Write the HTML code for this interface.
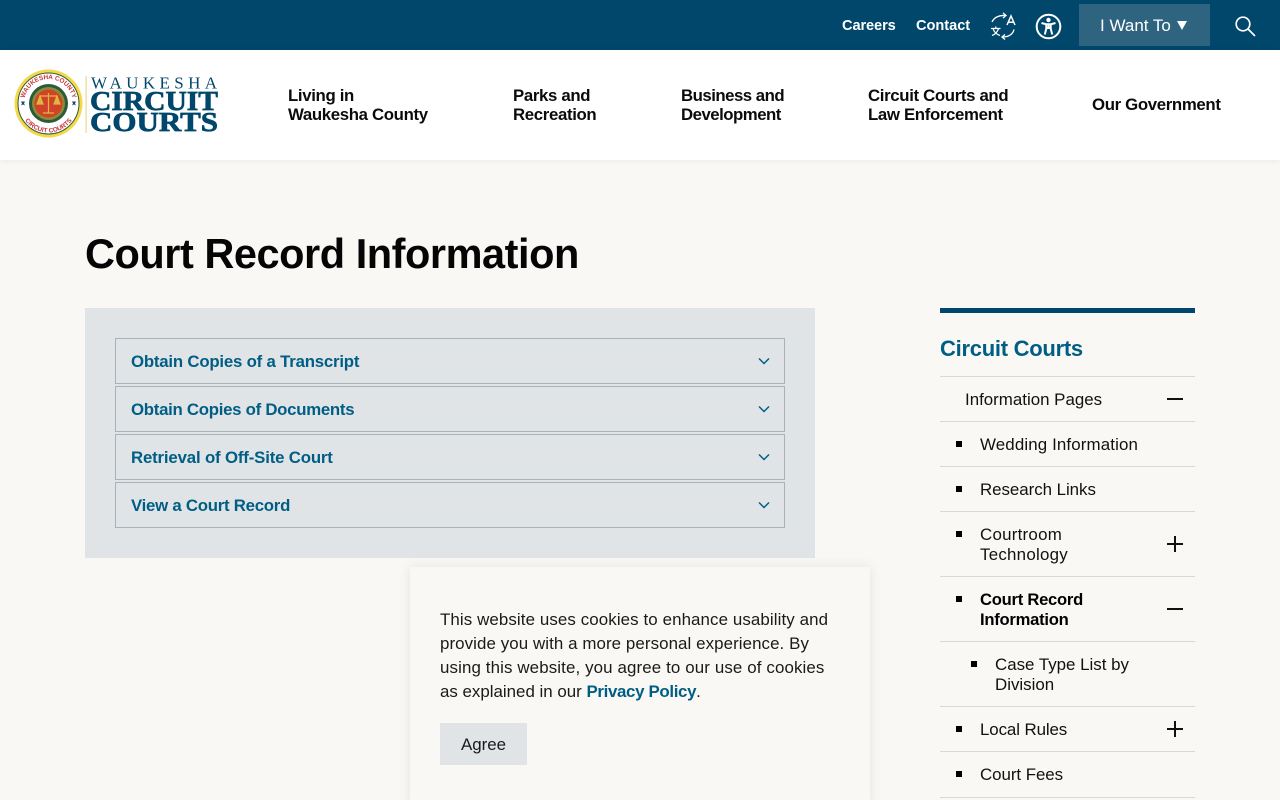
<!DOCTYPE html>
<html lang="en"><head><meta charset="utf-8"><title>Court Record Information</title>
<style>
html,body{margin:0;padding:0;width:1280px;height:800px;overflow:hidden}
body{position:relative;background:#faf8f5;font-family:"Liberation Sans",sans-serif;color:#000}
#page{position:absolute;left:0;top:0;width:1280px;height:800px;overflow:hidden}
.a,.t{position:absolute}
.t{white-space:nowrap}
a{color:inherit;text-decoration:none}
#top{left:0;top:0;width:1280px;height:50px;background:#00476b}
#hdr{left:0;top:50px;width:1280px;height:110px;background:#fff;box-shadow:0 1px 6px rgba(0,0,0,.06)}
.tl{color:#fff;font-weight:700;font-size:14.6px;line-height:20px;top:15.500px}
.nav{font-weight:700;font-size:16.8px;line-height:19px;color:#0b0b0b;letter-spacing:-.34px}
h1{margin:0;position:absolute;left:85px;top:229px;font-size:41.5px;line-height:50px;font-weight:700;white-space:nowrap;color:#050505;letter-spacing:-.46px}
.acc{left:115px;width:668px;height:44px;border:1px solid #a9b2b6;background:#e0e4e7}
.acl{left:15px;top:13px;font-weight:700;font-size:16.8px;line-height:20px;color:#005e85}
.acc svg{position:absolute;left:642px;top:16px}
.ln{left:940px;width:255px;height:1px;background:#d9d8d4}
.s{font-size:16.9px;line-height:20px;color:#111}
.b{width:6px;height:6px;background:#000}
.pm{left:1167px;width:16px;height:2px;background:#111}
.pv{left:1174px;width:2px;height:16px;background:#111}
#ck{left:410px;top:567px;width:460px;height:240px;background:#faf8f5;box-shadow:0 0 12px rgba(0,0,0,.09)}
.ct{left:30px;font-size:16.9px;line-height:24px;color:#1a1a1a}
</style></head><body><div id="page">
<div class="a" id="top"></div>
<a class="t tl" href="#" style="left:842px;letter-spacing:-.1px">Careers</a>
<a class="t tl" href="#" style="left:916px;letter-spacing:-.03px">Contact</a>
<svg class="a" style="left:989px;top:12px" width="28" height="28" viewBox="0 0 28 28" fill="none" stroke="#fff" stroke-width="1.3">
<path d="M3 10C5 5.500 10 3 16 3.500"/><path d="M14 0.800L17 3.500 14 6"/><path d="M25 17.500C24 22 20 25 13.500 25"/><path d="M16 22.500L13 25 16 27.500"/>
<path d="M2 16.500H11.500M6.800 14.500V16.500M4 16.500C5 20 8 22.500 11 23.500M9.500 16.500C8.500 20 6 22.500 3 23.500"/>
<path d="M18 13L22 4 26 13M19.300 10.300H24.700" stroke-width="1.500"/></svg>
<svg class="a" style="left:1035px;top:13px" width="27" height="27" viewBox="0 0 27 27" fill="none" stroke="#fff">
<circle cx="13.500" cy="13.500" r="11.800" stroke-width="2"/><circle cx="13.500" cy="7" r="2.200" fill="#fff" stroke="none"/>
<path d="M6.500 10L11 11.200H16L20.500 10M11.300 11.200V15.500L9.800 21.500M15.700 11.200V15.500L17.200 21.500M11.300 15H15.700M13.500 11V16" stroke-width="2"/></svg>
<div class="a" style="left:1079px;top:4px;width:131px;height:42px;background:#2e6480"></div>
<div class="t" style="left:1100px;top:15.500px;color:#fff;font-size:17px;line-height:20px">I Want To</div>
<svg class="a" style="left:1177px;top:21px" width="10" height="9"><path d="M0 0H10L5 9Z" fill="#fff"/></svg>
<svg class="a" style="left:1235px;top:16px" width="21" height="21" fill="none" stroke="#fff" stroke-width="1.700"><circle cx="8" cy="8" r="6.800"/><path d="M13 13L20 20"/></svg>

<div class="a" id="hdr"></div>
<svg class="a" style="left:10px;top:65px" width="215" height="78" viewBox="0 0 215 78">
<circle cx="38.500" cy="38.500" r="34" fill="#f3d84a"/><circle cx="38.500" cy="38.500" r="30.500" fill="#fff" stroke="#2b5b3a" stroke-width="1"/>
<circle cx="38.500" cy="38.500" r="19.500" fill="#2b5b3a"/><circle cx="38.500" cy="38.500" r="16.500" fill="#8f8a35"/><circle cx="38.500" cy="38.500" r="14" fill="#d0432a"/>
<path d="M38.500 28V48M30 31H47M33 48H44M30 31L27 39H33ZM47 31L44 39H50Z" stroke="#e0b63c" stroke-width="1.200" fill="#e0b63c"/>
<path id="arcT" d="M14 38.500A24.500 24.500 0 0 1 63 38.500" fill="none"/><path id="arcB" d="M9.500 38.500A29 29 0 0 0 67.500 38.500" fill="none"/>
<text font-size="6.400" font-weight="700" fill="#c8343a" font-family="Liberation Sans"><textPath href="#arcT" startOffset="50%" text-anchor="middle">WAUKESHA COUNTY</textPath></text>
<text font-size="6.400" font-weight="700" fill="#c8343a" font-family="Liberation Sans"><textPath href="#arcB" startOffset="50%" text-anchor="middle">CIRCUIT COURTS</textPath></text>
<path d="M11 40.500l2-1 2 1-1-2 1-2h-4l1 2zM62 40.500l2-1 2 1-1-2 1-2h-4l1 2z" fill="#22476f"/>
<rect x="75.500" y="11" width="1.200" height="57" fill="#ecd98a"/>
<g font-family="Liberation Serif,serif" fill="#00476b">
<text x="81" y="23.500" font-size="17" textLength="126" lengthAdjust="spacing">WAUKESHA</text>
<text x="80" y="45" font-size="27" font-weight="700" stroke="#00476b" stroke-width=".7" textLength="128" lengthAdjust="spacingAndGlyphs">CIRCUIT</text>
<text x="80" y="66" font-size="27" font-weight="700" stroke="#00476b" stroke-width=".7" textLength="128" lengthAdjust="spacingAndGlyphs">COURTS</text>
</g></svg>
<a class="t nav" href="#" style="left:288px;top:86px">Living in<br>Waukesha County</a>
<a class="t nav" href="#" style="left:513px;top:86px">Parks and<br>Recreation</a>
<a class="t nav" href="#" style="left:681px;top:86px;letter-spacing:-.5px">Business and<br>Development</a>
<a class="t nav" href="#" style="left:868px;top:86px">Circuit Courts and<br>Law Enforcement</a>
<a class="t nav" href="#" style="left:1092px;top:95px">Our Government</a>

<h1>Court Record Information</h1>
<div class="a" style="left:85px;top:308px;width:730px;height:250px;background:#e0e4e7"></div>
<div class="a acc" style="top:338px"><div class="t acl" style="letter-spacing:-.2px">Obtain Copies of a Transcript</div><svg width="12" height="12" fill="none" stroke="#005e85" stroke-width="1.500"><path d="M1 3.500L6 8.500 11 3.500"/></svg></div>
<div class="a acc" style="top:386px"><div class="t acl" style="letter-spacing:-.27px">Obtain Copies of Documents</div><svg width="12" height="12" fill="none" stroke="#005e85" stroke-width="1.500"><path d="M1 3.500L6 8.500 11 3.500"/></svg></div>
<div class="a acc" style="top:434px"><div class="t acl" style="letter-spacing:-.16px">Retrieval of Off-Site Court</div><svg width="12" height="12" fill="none" stroke="#005e85" stroke-width="1.500"><path d="M1 3.500L6 8.500 11 3.500"/></svg></div>
<div class="a acc" style="top:482px"><div class="t acl" style="letter-spacing:-.25px">View a Court Record</div><svg width="12" height="12" fill="none" stroke="#005e85" stroke-width="1.500"><path d="M1 3.500L6 8.500 11 3.500"/></svg></div>

<div class="a" style="left:940px;top:308px;width:255px;height:5px;background:#00476b"></div>
<div class="t" style="left:940px;top:335px;font-size:22px;line-height:28px;font-weight:700;color:#005e85;letter-spacing:-.27px">Circuit Courts</div>
<div class="a ln" style="top:376px"></div><div class="a ln" style="top:421px"></div><div class="a ln" style="top:466px"></div><div class="a ln" style="top:511px"></div><div class="a ln" style="top:576px"></div><div class="a ln" style="top:641px"></div><div class="a ln" style="top:706px"></div><div class="a ln" style="top:751px"></div><div class="a ln" style="top:797px"></div>
<a class="t s" href="#" style="left:965px;top:390px">Information Pages</a><div class="a pm" style="top:398px"></div>
<div class="a b" style="left:956px;top:441px"></div><a class="t s" href="#" style="left:980px;top:435px;letter-spacing:.13px">Wedding Information</a>
<div class="a b" style="left:956px;top:486px"></div><a class="t s" href="#" style="left:980px;top:480px;letter-spacing:-.04px">Research Links</a>
<div class="a b" style="left:956px;top:531px"></div><a class="t s" href="#" style="left:980px;top:525px;letter-spacing:.25px">Courtroom<br>Technology</a><div class="a pm" style="top:543px"></div><div class="a pv" style="top:536px"></div>
<div class="a b" style="left:956px;top:596px"></div><a class="t s" href="#" style="left:980px;top:590px;font-weight:700;color:#000;font-size:16.600px;letter-spacing:-.25px">Court Record<br>Information</a><div class="a pm" style="top:608px"></div>
<div class="a b" style="left:971px;top:661px"></div><a class="t s" href="#" style="left:995px;top:655px">Case Type List by<br>Division</a>
<div class="a b" style="left:956px;top:726px"></div><a class="t s" href="#" style="left:980px;top:720px;letter-spacing:-.1px">Local Rules</a><div class="a pm" style="top:728px"></div><div class="a pv" style="top:721px"></div>
<div class="a b" style="left:956px;top:771px"></div><a class="t s" href="#" style="left:980px;top:765px;letter-spacing:-.05px">Court Fees</a>

<div class="a" id="ck">
<div class="t ct" style="top:41px;letter-spacing:.1px">This website uses cookies to enhance usability and</div>
<div class="t ct" style="top:65px;letter-spacing:.08px">provide you with a more personal experience. By</div>
<div class="t ct" style="top:89px;letter-spacing:.12px">using this website, you agree to our use of cookies</div>
<div class="t ct" style="top:113px">as explained in our <a href="#" style="font-weight:700;color:#005e85;letter-spacing:-.35px">Privacy Policy</a>.</div>
<div class="a" style="left:30px;top:156px;width:87px;height:42px;background:#e0e4e7"></div>
<div class="t" style="left:51px;top:168px;font-size:16.9px;line-height:20px;color:#1a1a1a">Agree</div>
</div>
</div></body></html>
